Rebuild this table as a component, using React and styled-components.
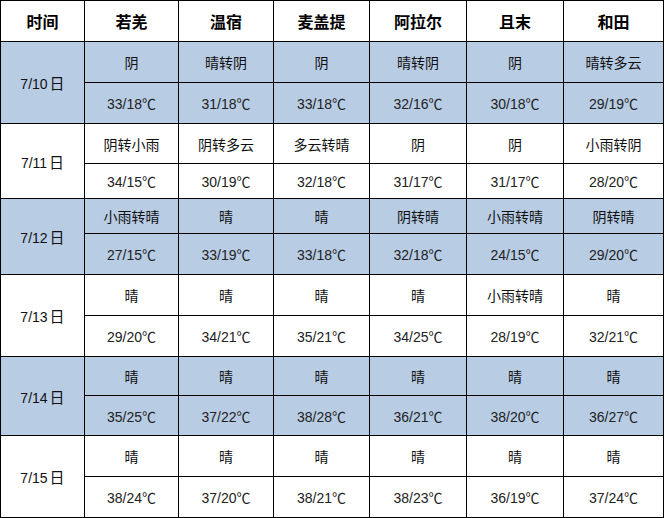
import React from "react";
import styled, { createGlobalStyle } from "styled-components";

const GlobalStyle = createGlobalStyle`
  html, body {
    margin: 0;
    padding: 0;
    background: #ffffff;
  }
  body {
    font-family: "Noto Sans CJK SC", "Noto Sans", sans-serif;
  }
`;

const cities = ["若羌", "温宿", "麦盖提", "阿拉尔", "且末", "和田"];
const widths = [84, 94, 95, 96, 97, 97, 100];

const days = [
  {
    date: "7/10",
    shade: true,
    heights: [41, 41],
    weather: ["阴", "晴转阴", "阴", "晴转阴", "阴", "晴转多云"],
    temp: ["33/18", "31/18", "33/18", "32/16", "30/18", "29/19"],
  },
  {
    date: "7/11",
    shade: false,
    heights: [40, 35],
    weather: ["阴转小雨", "阴转多云", "多云转晴", "阴", "阴", "小雨转阴"],
    temp: ["34/15", "30/19", "32/18", "31/17", "31/17", "28/20"],
  },
  {
    date: "7/12",
    shade: true,
    heights: [35, 41],
    weather: ["小雨转晴", "晴", "晴", "阴转晴", "小雨转晴", "阴转晴"],
    temp: ["27/15", "33/19", "33/18", "32/18", "24/15", "29/20"],
  },
  {
    date: "7/13",
    shade: false,
    heights: [41, 41],
    weather: ["晴", "晴", "晴", "晴", "小雨转晴", "晴"],
    temp: ["29/20", "34/21", "35/21", "34/25", "28/19", "32/21"],
  },
  {
    date: "7/14",
    shade: true,
    heights: [39, 40],
    weather: ["晴", "晴", "晴", "晴", "晴", "晴"],
    temp: ["35/25", "37/22", "38/28", "36/21", "38/20", "36/27"],
  },
  {
    date: "7/15",
    shade: false,
    heights: [41, 41],
    weather: ["晴", "晴", "晴", "晴", "晴", "晴"],
    temp: ["38/24", "37/20", "38/21", "38/23", "36/19", "37/24"],
  },
];

const Table = styled.table`
  width: 664px;
  table-layout: fixed;
  border-collapse: collapse;
  border: 1.5px solid #000;
  color: #111;
`;

const Row = styled.tr`
  height: ${({ $h }) => $h}px;
`;

const HeadCell = styled.th`
  border: 1.5px solid #000;
  background: #ffffff;
  font-size: 16px;
  font-weight: 700;
  text-align: center;
  padding: 0;
  color: #000;
`;

const DateCell = styled.td`
  border: 1.5px solid #000;
  background: ${({ $shade }) => ($shade ? "#b8cce4" : "#ffffff")};
  font-family: "Liberation Sans", "Noto Sans CJK SC", sans-serif;
  font-size: 14px;
  text-align: center;
  padding: 0;
`;

const DayMark = styled.span`
  font-family: "Noto Sans CJK SC", sans-serif;
  font-size: 15px;
  margin-left: 2px;
`;

const Cell = styled.td`
  border: 1.5px solid #000;
  background: ${({ $shade }) => ($shade ? "#b8cce4" : "#ffffff")};
  font-size: 14px;
  text-align: center;
  padding: 0;
  white-space: nowrap;
`;

const Temp = styled.span`
  font-family: "Liberation Sans", "Noto Sans CJK SC", sans-serif;
  font-size: 14px;
  color: #222;
`;

const Unit = styled.span`
  font-family: "Noto Sans CJK SC", sans-serif;
  font-size: 14px;
`;

export default function App() {
  return (
    <>
      <GlobalStyle />
      <Table>
        <colgroup>
          {widths.map((w, i) => (
            <col key={i} style={{ width: w }} />
          ))}
        </colgroup>
        <thead>
          <Row $h={41}>
            <HeadCell>时间</HeadCell>
            {cities.map((c) => (
              <HeadCell key={c}>{c}</HeadCell>
            ))}
          </Row>
        </thead>
        <tbody>
          {days.map((d) => (
            <React.Fragment key={d.date}>
              <Row $h={d.heights[0]}>
                <DateCell rowSpan={2} $shade={d.shade}>
                  {d.date}
                  <DayMark>日</DayMark>
                </DateCell>
                {d.weather.map((w, i) => (
                  <Cell key={i} $shade={d.shade}>
                    {w}
                  </Cell>
                ))}
              </Row>
              <Row $h={d.heights[1]}>
                {d.temp.map((t, i) => (
                  <Cell key={i} $shade={d.shade}>
                    <Temp>
                      {t}
                      <Unit>℃</Unit>
                    </Temp>
                  </Cell>
                ))}
              </Row>
            </React.Fragment>
          ))}
        </tbody>
      </Table>
    </>
  );
}
